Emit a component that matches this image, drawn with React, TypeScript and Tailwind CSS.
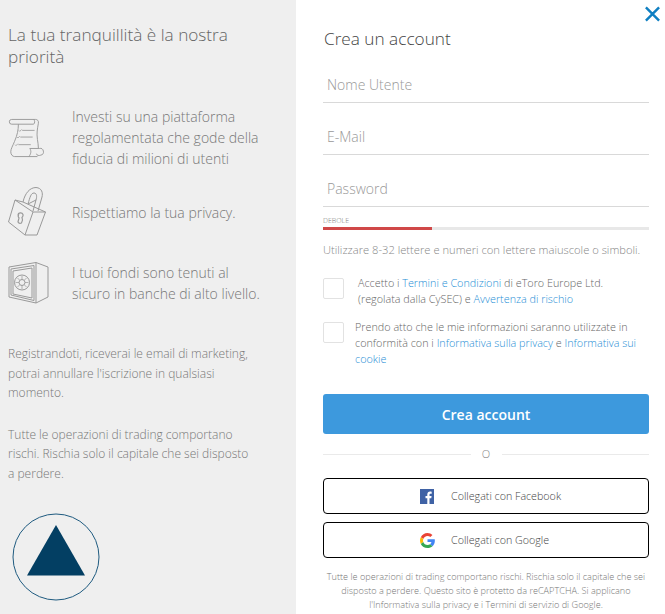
const linkClass = 'text-[#1f8fd6]';

function ScrollIcon() {
	return (
		<svg width="36" height="40" viewBox="0 0 36 42" fill="none" stroke="#999" strokeWidth="1">
			<path d="M3 1.500h25c2 0 3.500 1.500 3 4-1 6-2 10-1 17 .4 3 1 6 1 9" />
			<path d="M3 1.500a2.500 2.500 0 0 0 0 5h23c1.500-1.500 1.500-3.500 0-5" />
			<path d="M10 6.500c0 6-1 11-4 18-2 5-4 8-4 11 0 3 2 5 4 5h24" />
			<path d="M22 32h10a3.500 3.500 0 0 1 1.500 7c-1.500.7-4.500.5-4.500-1.500" />
			<path d="M22 32c2 3 1 6-1 8.500" />
			<path d="M14 13h13M12 20h13M10 28h13" stroke="#a0a0a0" />
			<path d="M10.500 13l1 1 2-2M8.500 20l1 1 2-2M6.500 28l1 1 2-2" strokeWidth="0.800" />
		</svg>
	);
}

function LockIcon() {
	return (
		<svg width="40" height="50" viewBox="0 0 40 50" fill="none" stroke="#999" strokeWidth="1">
			<path d="M7 13 25 25 17 48 .5 35Z" />
			<path d="M25 25H37.500L29 48H17" />
			<path d="M7 13l8 2 22.500 10" />
			<path d="M15 15C17 6 22 .5 28 .5 34 1 35 6 34 10L30 24" />
			<path d="M20 17C22 10 23 6 26 6 29 6 29 10 28 13L25 24" />
			<path d="M20 17l8-4" />
			<path d="M10 28c0-2.500 4-3 5-.5.500 1.500-.5 2.500-1 3 1 2 .5 4-.5 5.500-1.500.5-3 0-3.500-1l1-4c-1-1-1-2-.5-3Z" strokeWidth="1.200" />
		</svg>
	);
}

function SafeIcon() {
	return (
		<svg width="41" height="42" viewBox="0 0 41 42" fill="none" stroke="#999" strokeWidth="1">
			<path d="M1 5 28 .5v40.500L1 35Z" />
			<path d="M28 .5 40 5v30l-12 6" />
			<path d="M3 7 26 3.500v35L3 33Z" />
			<path d="M5 9 24 6v30L5 32Z" />
			<circle cx="14" cy="20.500" r="7.500" />
			<circle cx="14" cy="20.500" r="3" />
			<path d="M14 14v3.500M14 23.500V27M7.500 20.500H11M17 20.500h3.500M9.500 16l2 2M16.500 23l2 2M18.500 16l-2 2M11.500 23l-2 2" strokeWidth="0.700" />
		</svg>
	);
}

function FacebookIcon() {
	return (
		<svg width="14" height="15" viewBox="0 0 14 15">
			<rect width="14" height="15" fill="#3f62a5" />
			<path d="M9.500 15V9.300h1.800l.3-2.200H9.500V5.800c0-.7.200-1.100 1.100-1.100h1.100v-2c-.5-.1-1-.1-1.600-.1-1.700 0-2.800 1-2.800 2.900v1.600H5.500v2.200h1.800V15Z" fill="#fff" />
		</svg>
	);
}

function GoogleIcon() {
	return (
		<svg width="15" height="15" viewBox="0 0 48 48">
			<path fill="#EA4335" d="M24 9.500c3.500 0 6.700 1.300 9.100 3.500l6.800-6.800C35.800 2.400 30.200 0 24 0 14.600 0 6.500 5.400 2.600 13.200l7.900 6.100C12.400 13.700 17.700 9.500 24 9.500z" />
			<path fill="#4285F4" d="M47.500 24.500c0-1.600-.1-3.100-.4-4.500H24v9h12.700c-.6 3-2.200 5.500-4.700 7.200l7.700 6c4.400-4.100 7.800-10.100 7.800-17.700z" />
			<path fill="#FBBC05" d="M10.500 28.700c-.5-1.400-.8-3-.8-4.700s.3-3.200.8-4.700l-7.900-6.100C.9 16.500 0 20.100 0 24s.9 7.500 2.600 10.800l7.900-6.100z" />
			<path fill="#34A853" d="M24 48c6.500 0 11.900-2.100 15.900-5.800l-7.700-6c-2.200 1.500-4.900 2.300-8.200 2.300-6.300 0-11.600-4.200-13.500-9.800l-7.900 6.100C6.500 42.600 14.600 48 24 48z" />
		</svg>
	);
}

function Logo() {
	return (
		<svg width="88" height="88" viewBox="0 0 88 88" fill="none">
			<circle cx="44" cy="44" r="43" stroke="#1f5b80" strokeWidth="1" />
			<path d="M44 12 73 62.500H15Z" fill="#033f63" />
		</svg>
	);
}

function Feature({ icon, lines }: { icon: React.ReactNode; lines: string }) {
	return (
		<div className="flex items-center">
			<div className="w-[64px] flex justify-start">{icon}</div>
			<p className="w-[190px] text-[14px] leading-[21px] text-[#777] font-light">{lines}</p>
		</div>
	);
}

function Field({ label }: { label: string }) {
	return (
		<div className="h-[37px] pt-[7px] border-b border-[#d9d9d9] pl-[4px] text-[14px] leading-[24px] text-[#999] font-light">
			{label}
		</div>
	);
}

function SocialButton({ icon, label }: { icon: React.ReactNode; label: string }) {
	return (
		<div className="h-[36px] flex items-center border border-black rounded-[4px] pl-[96px] text-[10.700px] font-light text-[#444]">
			<div className="w-[31px] flex">{icon}</div>
			{label}
		</div>
	);
}

export default function App() {
	return (
		<div className="relative w-[665px] h-[614px] overflow-hidden flex bg-white font-['Open_Sans',sans-serif]">
			<div className="w-[296px] h-full bg-[#efefef] pl-[8px] pt-[24px] shrink-0">
				<h2 className="w-[270px] text-[17.200px] leading-[22px] text-[#666] font-light">
					La tua tranquillità è la nostra priorità
				</h2>
				<div className="mt-[38px] flex flex-col">
					<Feature icon={<ScrollIcon />} lines="Investi su una piattaforma regolamentata che gode della fiducia di milioni di utenti" />
					<div className="mt-[18px]">
						<Feature icon={<LockIcon />} lines="Rispettiamo la tua privacy." />
					</div>
					<div className="mt-[25px]">
						<Feature icon={<SafeIcon />} lines="I tuoi fondi sono tenuti al sicuro in banche di alto livello." />
					</div>
				</div>
				<p className="mt-[40px] w-[262px] text-[12px] leading-[19.500px] text-[#777] font-light">
					Registrandoti, riceverai le email di marketing, potrai annullare l'iscrizione in qualsiasi momento.
				</p>
				<p className="mt-[22px] w-[248px] text-[12px] leading-[19.500px] text-[#777] font-light">
					Tutte le operazioni di trading comportano rischi. Rischia solo il capitale che sei disposto a perdere.
				</p>
				<div className="mt-[30px] ml-[4px]">
					<Logo />
				</div>
			</div>

			<div className="w-[326px] ml-[27px] pt-[27px]">
				<h1 className="pl-px text-[17.200px] leading-[24px] text-[#444] font-light">Crea un account</h1>
				<div className="mt-[15px] flex flex-col gap-[15px]">
					<Field label="Nome Utente" />
					<Field label="E-Mail" />
					<Field label="Password" />
				</div>
				<div className="mt-[9px] text-[7px] leading-[10px] text-[#777] font-light">DEBOLE</div>
				<div className="mt-[1px] h-[3px] bg-[#e8e8e8]">
					<div className="h-full w-[109px] bg-[#d04848]" />
				</div>
				<p className="mt-[12px] text-[11.200px] leading-[16px] text-[#888] font-light whitespace-nowrap">
					Utilizzare 8-32 lettere e numeri con lettere maiuscole o simboli.
				</p>
				<div className="mt-[20px] flex">
					<div className="w-[21px] h-[21px] border border-[#e2e2e2] rounded-[2px] shrink-0" />
					<p className="-mt-[3px] ml-[14px] text-[10.800px] leading-[16px] text-[#666] font-light">
						Accetto i <span className={linkClass}>Termini e Condizioni</span> di eToro Europe Ltd.
						<br />
						(regolata dalla CySEC) e <span className={linkClass}>Avvertenza di rischio</span>
					</p>
				</div>
				<div className="mt-[15px] flex">
					<div className="w-[21px] h-[21px] border border-[#e2e2e2] rounded-[2px] shrink-0" />
					<p className="-mt-[3px] ml-[11px] text-[10.800px] leading-[16px] text-[#666] font-light">
						Prendo atto che le mie informazioni saranno utilizzate in conformità con i{' '}
						<span className={linkClass}>Informativa sulla privacy</span> e{' '}
						<span className={linkClass}>Informativa sui cookie</span>
					</p>
				</div>
				<div className="mt-[27px] h-[40px] rounded-[3px] bg-[#3d99dd] flex items-center justify-center text-[14px] font-semibold text-white">
					Crea account
				</div>
				<div className="mt-[12px] flex items-center">
					<div className="flex-1 h-px bg-[#eaeaea]" />
					<span className="w-[31px] text-center text-[11px] leading-[16px] text-[#888] font-light">O</span>
					<div className="flex-1 h-px bg-[#eaeaea]" />
				</div>
				<div className="mt-[16px] flex flex-col gap-[8px]">
					<SocialButton icon={<FacebookIcon />} label="Collegati con Facebook" />
					<SocialButton icon={<GoogleIcon />} label="Collegati con Google" />
				</div>
				<p className="mt-[12px] text-center text-[9.150px] leading-[14px] text-[#777] font-light">
					Tutte le operazioni di trading comportano rischi. Rischia solo il capitale che sei disposto a perdere. Questo sito è protetto da reCAPTCHA. Si applicano l'Informativa sulla privacy e i Termini di servizio di Google.
				</p>
			</div>

			<svg className="absolute top-[6px] right-[4px]" width="17" height="16" viewBox="0 0 17 17" fill="none" stroke="#0f7fc2" strokeWidth="2.600">
				<path d="M1.500 1.500l14 14M15.500 1.500l-14 14" />
			</svg>
		</div>
	);
}
